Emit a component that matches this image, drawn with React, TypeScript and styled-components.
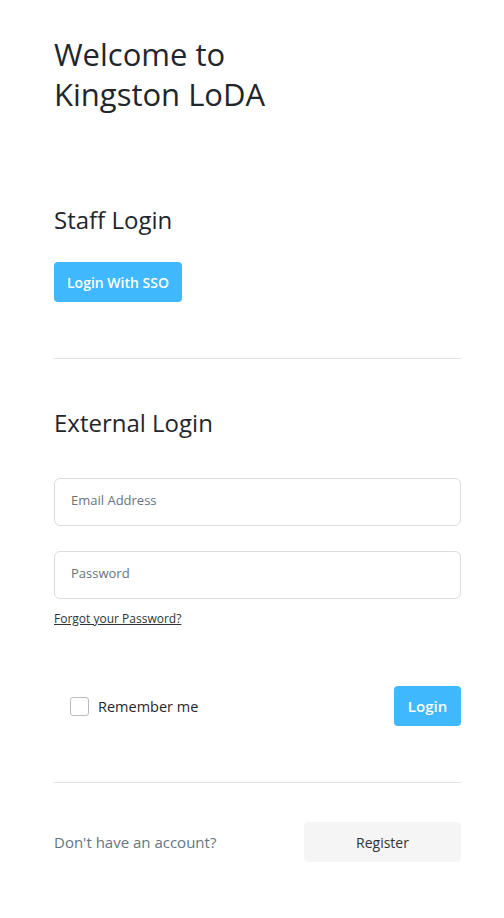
import { createGlobalStyle, styled } from "styled-components";

const GlobalStyle = createGlobalStyle`
  body {
    margin: 0;
    background: #fff;
    font-family: "Open Sans", "Noto Sans", Arial, sans-serif;
    color: #1f262c;
  }
`;

const Page = styled.div`
  padding: 34px 43px 40px 54px;
`;

const Title = styled.h1`
  margin: 0;
  font-size: 31px;
  line-height: 40px;
  font-weight: 400;
  color: #1f262c;
`;

const SectionTitle = styled.h2<{ $top: number }>`
  margin: ${(p) => p.$top}px 0 0;
  font-size: 24px;
  line-height: 32px;
  font-weight: 400;
  color: #1f262c;
`;

const Button = styled.button<{ $variant?: "primary" | "light" }>`
  height: 40px;
  border: none;
  border-radius: 4px;
  padding: 0 12px;
  font-family: inherit;
  font-size: 14px;
  font-weight: 600;
  white-space: nowrap;
  cursor: pointer;
  background: ${(p) => (p.$variant === "light" ? "#f5f5f5" : "#40b8fd")};
  color: ${(p) => (p.$variant === "light" ? "#2d3338" : "#fff")};
  ${(p) => p.$variant === "light" && "font-weight: 500; width: 157px;"}
`;

const SsoButton = styled(Button)`
  margin-top: 26px;
  width: 128px;
`;

const Divider = styled.hr<{ $top: number }>`
  margin: ${(p) => p.$top}px 0 0;
  border: none;
  border-top: 1px solid #e2e2e2;
`;

const Input = styled.input`
  display: block;
  box-sizing: border-box;
  width: 100%;
  height: 48px;
  border: 1px solid #dcdcdc;
  border-radius: 6px;
  padding: 0 16px 4px;
  font-family: inherit;
  font-size: 13px;
  color: #1f262c;
  outline: none;

  &::placeholder {
    color: #66757f;
  }
`;

const Field = styled.div<{ $top: number }>`
  margin-top: ${(p) => p.$top}px;
`;

const ForgotLink = styled.a`
  display: inline-block;
  margin-top: 11px;
  font-size: 12px;
  color: #2d3338;
  text-decoration: underline;
`;

const Row = styled.div<{ $top: number }>`
  display: flex;
  align-items: center;
  justify-content: space-between;
  margin-top: ${(p) => p.$top}px;
`;

const CheckLabel = styled.label`
  display: flex;
  align-items: center;
  gap: 9px;
  margin-left: 16px;
  font-size: 14.5px;
  color: #1f262c;
  cursor: pointer;
`;

const Checkbox = styled.span`
  width: 19px;
  height: 19px;
  border: 1px solid #b8bcc3;
  border-radius: 3px;
  box-sizing: border-box;
`;

const LoginButton = styled(Button)`
  width: 67px;
  font-size: 15px;
`;

const Muted = styled.span`
  font-size: 15px;
  color: #66757f;
`;

export default function App() {
  return (
    <>
      <GlobalStyle />
      <Page>
        <Title>
          Welcome to
          <br />
          Kingston LoDA
        </Title>

        <SectionTitle $top={90}>Staff Login</SectionTitle>
        <SsoButton>Login With SSO</SsoButton>

        <Divider $top={56} />

        <SectionTitle $top={48}>External Login</SectionTitle>
        <Field $top={39}>
          <Input type="email" placeholder="Email Address" />
        </Field>
        <Field $top={25}>
          <Input type="password" placeholder="Password" />
        </Field>
        <ForgotLink href="#">Forgot your Password?</ForgotLink>

        <Row $top={58}>
          <CheckLabel>
            <Checkbox />
            Remember me
          </CheckLabel>
          <LoginButton>Login</LoginButton>
        </Row>

        <Divider $top={56} />

        <Row $top={39}>
          <Muted>Don't have an account?</Muted>
          <Button $variant="light">Register</Button>
        </Row>
      </Page>
    </>
  );
}
